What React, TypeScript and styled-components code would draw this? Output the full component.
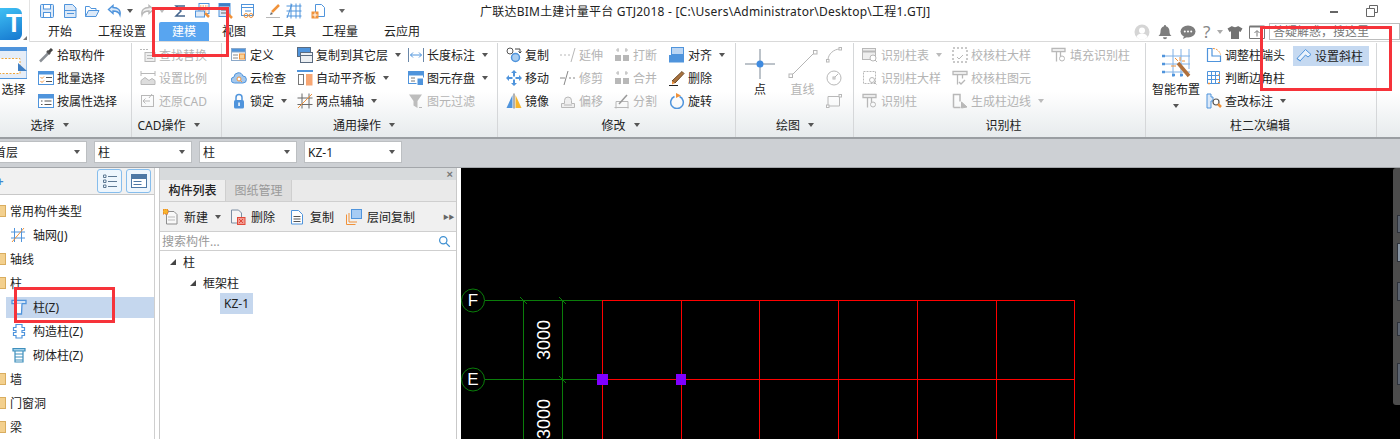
import React from 'react';
import styled, { createGlobalStyle } from 'styled-components';

const B = '#4f94dc', O = '#f0923a', G = '#b8b8b8', L = '#dce9f8', D = '#666', R = '#e04a3a', Y = '#f7b52c';

const line = (c: string) => ({ fill: 'none', stroke: c, strokeWidth: 1 });

const icons: Record<string, React.ReactNode> = {
  save: <g {...line(B)}><rect x="1.5" y="1.5" width="13" height="13" rx="1" fill={L} /><rect x="4.5" y="1.5" width="7" height="4.5" fill="#fff" /><rect x="4.5" y="9.5" width="7" height="5" fill="#fff" /></g>,
  doc: <g {...line(B)}><path d="M2.5 1.5h8l3.5 3.5v9.5h-11.500z" fill={L} /><path d="M2.500 7.500h11.500M5 10.500h7" /></g>,
  open: <g {...line(B)}><path d="M1.500 13.500v-10h4l1.500 2h5v2" /><path d="M1.500 13.500l3-6h10.500l-3 6z" fill={L} /></g>,
  undo: <g {...line(B)} strokeWidth="1.400"><path d="M6 2.500l-4.500 4 4.500 4v-2.500c4 0 6 1 7 4 1-5-2-7.500-7-7.500z" fill={L} /></g>,
  redo: <g {...line(G)} strokeWidth="1.400"><path d="M10 2.500l4.500 4-4.500 4v-2.500c-4 0-6 1-7 4-1-5 2-7.500 7-7.500z" fill="#f2f2f2" /></g>,
  sigma: <path d="M13 3h-9l5 5-5 5h9" {...line('#44648c')} strokeWidth="1.500" />,
  calc: <g><rect x="4" y="0.500" width="10" height="10" fill="#fff" stroke={B} /><path d="M5 3h8M5 5.500h8M5 8h8" stroke={O} strokeDasharray="1.500 1" /><rect x="0.500" y="8" width="9" height="6" fill={L} stroke={B} /><path d="M10 10l4 4" stroke={O} strokeWidth="2.500" /></g>,
  calc2: <g><rect x="2" y="0.500" width="11" height="13" fill={L} stroke={B} /><rect x="2" y="0.500" width="11" height="3" fill="#3f7fc4" /><path d="M4 7h6M4 10h6" stroke={D} /><path d="M10 10l5 5" stroke={O} strokeWidth="2.500" /></g>,
  calc3: <g {...line(B)}><rect x="1.500" y="1.500" width="12" height="11" fill="#fff" /><path d="M1.500 4.500h12M5 8h6" /><circle cx="6" cy="12.500" r="2" stroke={O} /><circle cx="11" cy="12.500" r="2" stroke={O} /></g>,
  pen: <g><path d="M14 2L7 9" stroke={O} strokeWidth="2.500" /><path d="M6 9l2 2-3 1z" fill={D} /><path d="M1 14.500h14" stroke={G} /></g>,
  grid: <g {...line(B)}><path d="M5 0.500v15M10 0.500v15M14 0.500v15M0.500 3h15M0.500 8h15M0.500 13h15" /><path d="M1 15L6 1" /></g>,
  docPlus: <g><path d="M4.500 1.500h6l3 3v9h-9z" fill="#fff" stroke={B} /><rect x="0.500" y="8.500" width="7" height="7" fill={O} /><path d="M4 9.500v5M1.500 12h5" stroke="#fff" /></g>,
  pick: <g><path d="M2 14.500l8-8" stroke="#8a8f95" strokeWidth="2.500" /><path d="M9 4l3 3" stroke="#555" strokeWidth="2.500" /><path d="M11 5l3-3" stroke="#444" strokeWidth="3" /></g>,
  listCheck: <g {...line(B)}><rect x="0.500" y="1.500" width="15" height="13" fill="#fff" /><rect x="0.500" y="1.500" width="15" height="2.500" fill={B} /><path d="M2.500 7l1.500 1.500 2-2M2.500 11l1.500 1.500 2-2" stroke={O} /><path d="M8 7.500h6M8 11.500h6" stroke="#555" /></g>,
  listAttr: <g {...line(B)}><rect x="0.500" y="1.500" width="15" height="13" fill="#fff" /><rect x="0.500" y="1.500" width="15" height="3.500" fill={B} /><path d="M3 8h1.500M3 11.500h1.500M6.500 8h7M6.500 11.500h7" stroke="#555" /></g>,
  find: <g {...line(G)}><path d="M0 2.500h8" strokeDasharray="2 1" /><rect x="5" y="5.500" width="10" height="9" fill="#eee" /><path d="M7 8.500h6M7 11.500h6" /></g>,
  scale: <g {...line(G)}><path d="M1 3.500h14M1 1v5M15 1v5" /><path d="M1 14.500v-4l4-3 4 3 3-2 3 2v4z" fill="#ddd" /></g>,
  restore: <g {...line(G)}><rect x="1.500" y="2.500" width="12" height="11" /><path d="M3 8h7M5.500 5.500L3 8l2.500 2.500M12 1l-3 4" /></g>,
  define: <g {...line('#8ca9c9')}><rect x="0.500" y="1.500" width="14" height="12" fill="#fff" /><rect x="0.500" y="1.500" width="14" height="3.500" fill={B} /><rect x="8.500" y="7" width="5" height="5" fill="#f9d39a" stroke={O} /><path d="M2 8h5M2 11h5" stroke="#8a8a8a" /></g>,
  cloud: <g><path d="M3.500 13a3 3 0 0 1-.5-6 4.500 4.500 0 0 1 8.800-1 3.500 3.500 0 0 1 .2 7z" fill="#a5c8ec" stroke={B} /><circle cx="8" cy="9" r="2" fill="#fff" stroke={O} /><path d="M9.500 10.500l1.500 1.500" stroke={O} /></g>,
  lock: <g><path d="M5 7V4.500a3 3 0 0 1 6 0V7" {...line(B)} strokeWidth="1.500" /><rect x="3" y="7" width="10" height="8.500" rx="1.500" fill={B} /><rect x="7.300" y="9.500" width="1.500" height="3.500" fill="#fff" /></g>,
  copyFloor: <g {...line('#5a6b80')}><rect x="0.500" y="0.500" width="13" height="9" fill={B} /><rect x="3.500" y="5.500" width="12" height="10" fill="#eceff2" /><path d="M3.500 8.500h12" /></g>,
  plate: <g><path d="M0 1h16" stroke={B} strokeWidth="2" /><rect x="1.500" y="4.500" width="5" height="10" fill="#fff" stroke="#777" /><rect x="9" y="4" width="6.500" height="11.500" fill="#f7a673" /></g>,
  twoPoint: <g {...line('#6b6b6b')}><path d="M5 0.500v15M12 0.500v15M0.500 5h15M0.500 11.500h15" /><path d="M1 15L15 1" stroke={O} /></g>,
  dim: <g {...line('#6a87a8')}><path d="M0.500 1v14M15.500 1v14" /><path d="M2.500 8h11M5 5.500L2.500 8 5 10.500M11 5.500L13.500 8 11 10.500" stroke={B} /></g>,
  saveEl: <g {...line(B)}><rect x="0.500" y="1.500" width="15" height="12" fill="#fff" /><rect x="0.500" y="1.500" width="15" height="3.500" fill={B} /><path d="M3 8h4M3 11h4" stroke="#777" /><rect x="9" y="8" width="6.500" height="7.500" fill={B} stroke="#fff" /></g>,
  filter: <g><path d="M1 1.500h13L9.500 8v7l-4-2.500V8z" fill="#bdbdbd" /><path d="M11 14.500h3" stroke={G} /></g>,
  copy: <g><circle cx="4" cy="4" r="3" fill="#fff" stroke="#555" /><circle cx="9.500" cy="10.500" r="4" fill="#a9cdf0" stroke={B} strokeWidth="1.500" /><path d="M9 2h5v4M12.500 4.500L14 6l1.500-1.500" {...line('#444')} /></g>,
  move: <g fill={B}><path d="M8 0l3 3H9v3.500H7V3H5zM8 16l-3-3h2V9.500h2V13h2zM0 8l3-3v2h3.500v2H3v2zM16 8l-3 3V9H9.500V7H13V5z" /></g>,
  mirror: <g><path d="M6.500 2v13H0.500z" fill={B} /><path d="M9.500 2v13h6z" fill={Y} /><path d="M8 0.500v15" stroke="#666" /></g>,
  extend: <path d="M0 8h2M4 8h2M8 8h2M15 1L11 15" {...line(G)} />,
  trim: <path d="M0 8h5M9 8h2M13 8h2M8 1L4 15" {...line('#888')} />,
  offset: <g {...line(G)}><path d="M1.500 14.500v-4h3v-3a3.500 3.500 0 0 1 7 0v3h3v4z" fill="#efefef" /><path d="M4 12h8" /></g>,
  break: <g fill={G}><rect x="1" y="8" width="6" height="6" /><rect x="9" y="8" width="6" height="6" /><path d="M2 3h3M11 3h3M4 1v4M12 1v4" stroke={G} /></g>,
  split: <g {...line(G)}><path d="M0.500 14.500h14M2 8.500h12v7M2 8.500v7" /><path d="M5 11L13 2" stroke="#999" strokeWidth="1.500" /></g>,
  align: <g><rect x="2.500" y="0.500" width="12" height="7" fill="#bcd6f3" stroke={B} /><rect x="0" y="8" width="15" height="7.500" fill={B} /></g>,
  erase: <g><path d="M3 11L13 1.500l2 2L6 13z" fill="#a9733f" stroke="#6f4a26" /><path d="M3 11l3 2-3 1.500z" fill={O} /><path d="M0 15.500h9" stroke="#222" /></g>,
  rotate: <g><path d="M5.500 3.500a6.300 6.300 0 1 0 5 0" {...line(B)} strokeWidth="1.500" /><path d="M7 0v5l5-2.500z" fill={O} /></g>,
  arc: <g {...line(G)}><path d="M2 13C2 7 8 2 14 2" /><rect x="0.500" y="12.500" width="2.500" height="2.500" fill="#fff" /><rect x="13" y="0.500" width="2.500" height="2.500" fill="#fff" /></g>,
  circle: <g {...line(G)}><circle cx="8" cy="8" r="7" /><path d="M8 8l4-4" /><rect x="7" y="7" width="2" height="2" fill="#fff" /></g>,
  rectDraw: <g {...line(G)}><path d="M2 3.500h11.500v9.500H2z" /><rect x="0.500" y="12" width="2.500" height="2.500" fill="#fff" /><rect x="13" y="1.500" width="2.500" height="2.500" fill="#fff" /></g>,
  rTable: <g {...line(G)}><rect x="0.500" y="1.500" width="13" height="11" fill="#eee" /><path d="M0.500 4.500h13" strokeWidth="2" /><circle cx="11" cy="11" r="3" fill="#fff" /><path d="M13 13l2 2" /></g>,
  rDetail: <g {...line(G)}><rect x="1.500" y="1.500" width="12" height="12" strokeDasharray="2 1" /><circle cx="10" cy="10" r="2.500" fill="#fff" /><path d="M12 12l2.500 2.500" /></g>,
  rCol: <g {...line(G)}><path d="M1 1.500h13v3H1zM4 4.500h7M5.500 4.500v10M9.500 4.500v5" strokeWidth="1.300" /><circle cx="11" cy="11.500" r="2.500" /></g>,
  cDetail: <g {...line(G)}><rect x="1" y="1" width="14" height="14" strokeDasharray="2 2" strokeWidth="1.500" /><path d="M5 10l2 2 4-4" /></g>,
  cCol: <g {...line(G)}><path d="M1 1.500h14v3H1zM4 4.500h8M5.500 4.500v10M10.500 4.500v4M7 12l2 2 4-4" strokeWidth="1.300" /></g>,
  edge: <g {...line(G)}><path d="M1.500 14.500v-13h6.500v7" strokeWidth="1.500" /><path d="M1.500 14.500h7" strokeWidth="1.500" /><path d="M9.500 9l5.500 5-5.500 1z" fill={G} /></g>,
  adjust: <g><path d="M1.500 1.500h4.500v7.500h8.500v5.500H1.500z" fill="#fff" {...line(B)} strokeWidth="1.200" /><path d="M7 1.500a8 8 0 0 1 7.500 6" {...line(O)} strokeDasharray="2 1" /></g>,
  corner: <g {...line(B)}><path d="M1.500 1.500h12v12h-12zM5.500 1.500v12M9.500 1.500v12M1.500 5.500h12M1.500 9.500h12" /><path d="M2 13.500h2M3 12.500v2M12 12.500h2M13 4v2M11 9.500h2" stroke={O} /></g>,
  mark: <g><path d="M1 1h4v3h2v4H5v7H1z" fill={L} stroke={B} /><circle cx="10" cy="9" r="3" fill="#fff" stroke="#555" strokeWidth="1.200" /><path d="M12 11l3 3" stroke={O} strokeWidth="2.500" /></g>,
  slant: <g {...line(B)} fill="#eaf2fc"><path d="M1 10.500L9.500 1.500l5.500 5-3 2.500-2.500-2-5.500 6z" /><path d="M1 10.500l3.500 2.500" /></g>,
  newDoc: <g><path d="M3.500 2.500h7.500l3 3v9.500H3.500z" fill="#f8f8f8" stroke="#8e8e8e" /><path d="M5 8h7M5 11h7" stroke="#bbb" /><rect x="0" y="0" width="5" height="5" fill={Y} stroke="#e06a2a" strokeDasharray="1 1" /></g>,
  delDoc: <g><path d="M1.500 1h7l3 3v10h-10z" fill="#f5f5f5" stroke="#7c8ea3" /><rect x="7.500" y="8.500" width="7.500" height="7" fill="#f29c93" stroke={R} /><path d="M9 10l4 4M13 10l-4 4" stroke={R} /></g>,
  copyDoc: <g {...line(B)}><path d="M2.500 1.500h7l4 4v9.500h-11z" fill="#fff" /><path d="M4.500 7.500h7M4.500 10h7M4.500 12.500h7" stroke="#555" /></g>,
  floorCopy: <g><path d="M0.500 5.500v10h9" {...line(O)} /><path d="M3 4v9h8" {...line(O)} /><rect x="5.500" y="0.500" width="10" height="9" fill="#a7ccf4" stroke={B} /></g>,
  net: <g {...line(B)}><path d="M3.500 1v14M10.500 1v14M0 5h14M0 11h14" /><path d="M1 15L13 1" stroke={O} /></g>,
  col: <g {...line(B)}><path d="M1 1.500h14v3H1z" fill="#fff" strokeWidth="1.300" /><path d="M5 4.500l.5 10.500h5L11 4.500" fill="#fff" strokeWidth="1.300" /></g>,
  struct: <g {...line(B)} strokeWidth="1.200"><path d="M5 1.500h6v3h2.500v3H11v2h2.500v3H11v2.500H5V12.500H2.500v-3H5v-2H2.500v-3H5z" fill="#fff" /></g>,
  masonry: <g {...line('#3f8fbc')} strokeWidth="1.200"><path d="M2 1.500h12v2.500H2z" fill="#9fd0ea" /><path d="M4 4v11h8V4M4 7h8M4 10h8M4 13h8" /></g>,
  avatar: <g><circle cx="8" cy="8" r="7.500" fill="#d5d5d5" /><circle cx="8" cy="6.500" r="3" fill="#fff" /><path d="M2.500 13c1-3 3-3.500 5.500-3.500s4.500.5 5.500 3.500a7 7 0 0 1-11 0z" fill="#fff" /></g>,
  bell: <path d="M8 1a1 1 0 0 1 1 1.200c2.500.6 3.500 2.800 3.500 5.300 0 2 .5 3 2 4.500H1.500c1.500-1.500 2-2.500 2-4.500 0-2.500 1-4.700 3.500-5.300A1 1 0 0 1 8 1zM6 13.200h4a2 2 0 0 1-4 0z" fill="#7d7d7d" />,
  chat: <g><ellipse cx="8" cy="7.500" rx="7.500" ry="6" fill="#7d7d7d" /><path d="M4 12l-1 3 4-2z" fill="#7d7d7d" /><circle cx="4.800" cy="7.500" r="1" fill="#fff" /><circle cx="8" cy="7.500" r="1" fill="#fff" /><circle cx="11.200" cy="7.500" r="1" fill="#fff" /></g>,
  shirt: <path d="M5 2L0.500 4.500 2.500 8 4 7.200V15h8V7.200L13.500 8l2-3.500L11 2C10 3.500 6 3.500 5 2z" fill="#737373" />,
  upbox: <g {...line('#777')}><path d="M0.500 2.500h15v12h-15z" /><path d="M0.500 2.500h15" strokeWidth="2" /><path d="M8 12.500V7M5.500 9L8 6.500 10.500 9" /></g>,
  search: <g {...line('#3d8fd1')} strokeWidth="1.500"><circle cx="6.500" cy="6.500" r="4.500" /><path d="M10 10l4.500 4.500" /></g>,
  listView: <g {...line('#5d7893')}><path d="M1.500 2h2.500v2.500H1.500zM1.500 7h2.500v2.500H1.500zM1.500 12h2.500v2.500H1.500zM6 3.500h9M6 8.500h9M6 13.500h9" /></g>,
  cardView: <g {...line('#4e78a5')}><rect x="0.500" y="1.500" width="15" height="13" fill="#fff" /><rect x="0.500" y="1.500" width="15" height="4" fill="#4e78a5" /><path d="M2.500 8.500h8M2.500 11.500h8" /></g>,
};

const Svg = styled.svg`
  display: block;
  flex: none;
`;

const Icon = ({ n, s = 16 }: { n: string; s?: number }) => (
  <Svg width={s} height={s} viewBox="0 0 16 16">{icons[n]}</Svg>
);

const Global = createGlobalStyle`
  html, body { margin: 0; padding: 0; background: #fff; }
  body { font: 12px "Noto Sans", "Noto Sans CJK SC", sans-serif; color: #222; }
`;

const Root = styled.div`
  position: relative;
  width: 1400px;
  height: 439px;
  overflow: hidden;
  display: flex;
  flex-direction: column;
  background: #fff;
`;

const Header = styled.header`
  height: 42px;
  display: flex;
  flex: none;
  background: #fff;
`;
const LogoCol = styled.div`
  width: 30px;
  flex: none;
  box-sizing: border-box;
  padding-top: 8px;
  border-right: 1px solid #e3e3e3;
  position: relative;
`;
const Logo = styled.div`
  width: 22px;
  height: 32px;
  border-radius: 0 6px 6px 0;
  background: linear-gradient(160deg, #3fc0f4, #1577cf);
  color: #fff;
  font: bold 26px/30px "Liberation Sans", sans-serif;
  text-align: right;
  overflow: hidden;
`;
const LogoTag = styled.i`
  position: absolute;
  left: 23px;
  top: 36px;
  width: 0;
  height: 0;
  border-left: 4px solid transparent;
  border-bottom: 4px solid #777;
`;
const HeadMain = styled.div`
  flex: 1;
  min-width: 0;
  display: flex;
  flex-direction: column;
  border-bottom: 1px solid #d9d9d9;
`;
const TitleRow = styled.div`
  height: 21px;
  margin-bottom: 1px;
  display: flex;
  align-items: center;
`;
const Quick = styled.div`
  width: 450px;
  flex: none;
  display: flex;
  align-items: center;
  padding-left: 9px;
  box-sizing: border-box;
`;
const QBtn = styled.span<{ $w: number }>`
  width: ${p => p.$w}px;
  flex: none;
  display: flex;
  align-items: center;
`;
const Caret = styled.i<{ $ml?: number; $c?: string }>`
  flex: none;
  display: inline-block;
  margin-left: ${p => p.$ml ?? 4}px;
  width: 0;
  height: 0;
  border-left: 3.500px solid transparent;
  border-right: 3.500px solid transparent;
  border-top: 4px solid ${p => p.$c ?? '#555'};
`;
const Title = styled.div`
  font-size: 12px;
  letter-spacing: 0.23px;
  white-space: nowrap;
  color: #222;
`;
const WinBtns = styled.div`
  margin-left: auto;
  display: flex;
  align-items: center;
  gap: 28px;
  padding-right: 22px;
`;
const WinMin = styled.i`
  display: block;
  width: 8px;
  height: 2px;
  background: #666;
  margin-top: 3px;
`;
const TabRow = styled.div`
  height: 19px;
  display: flex;
  align-items: center;
`;
const Tabs = styled.nav`
  display: flex;
  height: 19px;
  padding-left: 5px;
`;
const Tab = styled.div<{ $on?: boolean }>`
  padding: 0 13px;
  line-height: 19px;
  height: 19px;
  border-radius: 2px 2px 0 0;
  white-space: nowrap;
  background: ${p => (p.$on ? '#58a5f0' : 'transparent')};
  color: ${p => (p.$on ? '#fff' : '#222')};
`;
const Tools = styled.div`
  margin-left: auto;
  display: flex;
  align-items: center;
`;
const ToolCell = styled.span<{ $w: number }>`
  width: ${p => p.$w}px;
  display: flex;
  align-items: center;
`;
const Ask = styled.span`
  color: #888;
  font-size: 17px;
  line-height: 16px;
  width: 10px;
  padding-left: 3px;
`;
const AskBox = styled.div`
  width: 131px;
  height: 17px;
  box-sizing: border-box;
  border: 1px solid #bdbdbd;
  color: #777;
  padding-left: 3px;
  line-height: 15px;
  white-space: nowrap;
  overflow: hidden;
`;

const Ribbon = styled.section`
  height: 97px;
  flex: none;
  box-sizing: border-box;
  display: flex;
  padding-top: 1px;
  border-bottom: 2px solid #9a9ea2;
  background: linear-gradient(#fff 0, #fff 52%, #e7ebed 100%);
`;
const Group = styled.div<{ $w: number; $pl?: number }>`
  width: ${p => p.$w}px;
  flex: none;
  box-sizing: border-box;
  display: flex;
  flex-direction: column;
  padding-left: ${p => p.$pl ?? 0}px;
  border-right: 1px solid #d5d7d9;
`;
const Body = styled.div`
  height: 69px;
  display: flex;
`;
const GroupLabel = styled.div<{ $pr?: number }>`
  height: 25px;
  margin-left: ${p => -(p.$pr ?? 0)}px;
  display: flex;
  align-items: center;
  justify-content: center;
  font-size: 12px;
  color: #222;
  padding-right: ${p => p.$pr ?? 0}px;
`;
const Col = styled.div<{ $w?: number }>`
  ${p => (p.$w ? `width: ${p.$w}px;` : 'flex: 1;')}
  flex-shrink: 0;
  display: flex;
  flex-direction: column;
`;
const Item = styled.div<{ $off?: boolean }>`
  height: 23px;
  display: flex;
  align-items: center;
  gap: 3px;
  white-space: nowrap;
  color: ${p => (p.$off ? '#b4b4b4' : '#222')};
`;
const Active = styled(Item)`
  height: 20px;
  width: 76px;
  margin-top: 3px;
  padding-left: 3px;
  box-sizing: border-box;
  background: #c5d9f1;
`;
const Large = styled.div<{ $w: number; $mr?: number; $off?: boolean }>`
  width: ${p => p.$w}px;
  margin-right: ${p => p.$mr ?? 0}px;
  flex: none;
  display: flex;
  flex-direction: column;
  align-items: center;
  white-space: nowrap;
  color: ${p => (p.$off ? '#b4b4b4' : '#222')};
`;
const LargeIcon = styled.div`
  height: 36px;
  display: flex;
  align-items: flex-end;
`;
const LargeText = styled.div`
  margin-top: 3px;
  line-height: 16px;
`;
const LargeCaret = styled.div`
  margin-top: 6px;
  line-height: 0;
`;

const Strip = styled.div`
  height: 29px;
  flex: none;
  box-sizing: border-box;
  background: #cdd0d4;
  border-bottom: 1px solid #a3a6aa;
  display: flex;
  align-items: center;
  gap: 7px;
  padding-bottom: 2px;
  margin-left: -10px;
`;
const Combo = styled.div<{ $w: number }>`
  width: ${p => p.$w}px;
  height: 22px;
  box-sizing: border-box;
  background: #fff;
  border: 1px solid #bcbfc2;
  display: flex;
  align-items: center;
  justify-content: space-between;
  padding: 0 6px 0 3px;
  font-size: 12px;
`;

const Main = styled.main`
  flex: 1;
  min-height: 0;
  display: flex;
`;
const Tree = styled.aside`
  width: 155px;
  flex: none;
  box-sizing: border-box;
  border-right: 1px solid #cfcfcf;
  overflow: hidden;
`;
const TreeBar = styled.div`
  height: 27px;
  box-sizing: border-box;
  background: #f1f1f1;
  border-bottom: 1px solid #c8c8c8;
  display: flex;
  align-items: center;
  padding-right: 3px;
  gap: 4px;
`;
const Plus = styled.span`
  margin-right: auto;
  margin-left: -4px;
  color: #3f87d0;
  font: bold 13px/13px "Liberation Sans", sans-serif;
`;
const ViewBtn = styled.div`
  width: 25px;
  height: 24px;
  box-sizing: border-box;
  border: 1px solid #86bdec;
  border-radius: 3px;
  background: #eef6fd;
  display: flex;
  align-items: center;
  justify-content: center;
`;
const TreeList = styled.ul`
  list-style: none;
  margin: 4px 0 0;
  padding: 0;
`;
const Row = styled.li`
  height: 24px;
  display: flex;
  align-items: center;
`;
const Folder = styled.i`
  width: 6px;
  height: 12px;
  flex: none;
  margin-right: 4px;
  background: #f3d08e;
  border: solid #d9ad5f;
  border-width: 1px 1px 1px 0;
  box-sizing: border-box;
`;
const Leaf = styled.div<{ $on?: boolean }>`
  margin-left: 6px;
  flex: 1;
  height: 21px;
  display: flex;
  align-items: center;
  gap: 6px;
  padding-left: 5px;
  background: ${p => (p.$on ? '#c5d7ee' : 'transparent')};
`;
const Gap = styled.div`
  width: 4px;
  flex: none;
`;
const Panel = styled.section`
  width: 298px;
  flex: none;
  box-sizing: border-box;
  border: solid #c9c9c9;
  border-width: 0 1px;
  display: flex;
  flex-direction: column;
`;
const PanelTop = styled.div`
  height: 12px;
  flex: none;
  background: #d7dadc;
  display: flex;
  justify-content: flex-end;
  align-items: center;
  padding-right: 3px;
  color: #777;
  font: bold 11px/12px "Liberation Sans", sans-serif;
`;
const PanelTabs = styled.div`
  height: 21px;
  flex: none;
  display: flex;
  background: #eaeaea;
  border-bottom: 1px solid #cfcfcf;
`;
const PanelTab = styled.div<{ $on?: boolean }>`
  width: 65px;
  text-align: center;
  line-height: 21px;
  font-weight: ${p => (p.$on ? 500 : 400)};
  color: ${p => (p.$on ? '#222' : '#999')};
  background: ${p => (p.$on ? '#eeeeee' : '#dedede')};
  border-right: 1px solid #cfcfcf;
`;
const PanelBar = styled.div`
  height: 30px;
  flex: none;
  box-sizing: border-box;
  background: #f0f0f0;
  border-bottom: 1px solid #cfcfcf;
  display: flex;
  align-items: center;
  padding-left: 3px;
`;
const PanelBtn = styled.div<{ $w: number }>`
  width: ${p => p.$w}px;
  flex: none;
  display: flex;
  align-items: center;
  gap: 5px;
  white-space: nowrap;
`;
const More = styled.span`
  margin-left: auto;
  margin-right: 2px;
  font-size: 6px;
  letter-spacing: -0.500px;
  color: #666;
`;
const SearchRow = styled.div`
  height: 19px;
  flex: none;
  box-sizing: border-box;
  border-bottom: 1px solid #cfcfcf;
  display: flex;
  align-items: center;
  justify-content: space-between;
  padding: 0 5px 0 2px;
  color: #999;
`;
const Node = styled.div<{ $lv: number }>`
  height: 21px;
  display: flex;
  align-items: center;
  padding-left: ${p => p.$lv}px;
  gap: 7px;
`;
const Arrow = styled.i`
  width: 0;
  height: 0;
  border-left: 6px solid transparent;
  border-bottom: 6px solid #444;
`;
const Selected = styled.span`
  background: #c5d7ee;
  line-height: 21px;
  padding: 0 4px;
`;
const Canvas = styled.div`
  position: relative;
  flex: 1;
  margin-left: 4px;
  background: #000;
`;
const Plot = styled.svg`
  display: block;
`;
const SideDock = styled.div`
  position: absolute;
  right: 0;
  top: 0;
  width: 7px;
  height: 237px;
  background: #4c4c4c;
  border-radius: 3px 0 0 3px;
  overflow: hidden;
`;
const DockChip = styled.i<{ $y: number; $h: number; $c: string }>`
  position: absolute;
  left: 4px;
  top: ${p => p.$y}px;
  width: 6px;
  height: ${p => p.$h}px;
  background: ${p => p.$c};
  border: 1px solid #2c3038;
  box-sizing: border-box;
`;
const Mark = styled.div<{ $x: number; $y: number; $w: number; $h: number }>`
  position: absolute;
  left: ${p => p.$x}px;
  top: ${p => p.$y}px;
  width: ${p => p.$w}px;
  height: ${p => p.$h}px;
  box-sizing: border-box;
  border: 3px solid #f6333a;
  pointer-events: none;
`;

const I = ({ n, t, off, caret }: { n: string; t: string; off?: boolean; caret?: boolean }) => (
  <Item $off={off}>
    <Icon n={n} />
    {t}
    {caret && <Caret $c={off ? '#bbb' : '#555'} />}
  </Item>
);

const quick = [
  ['save', 23], ['doc', 22], ['open', 23], ['undo', 32, 1], ['redo', 33, 1], ['sigma', 23], ['calc', 22], ['calc2', 23], ['calc3', 25],
  ['pen', 21], ['grid', 25], ['docPlus', 24],
] as [string, number, number?][];

const tabs = ['开始', '工程设置', '建模', '视图', '工具', '工程量', '云应用'];

const treeRows: { t: string; n?: string; on?: boolean }[] = [
  { t: '常用构件类型' }, { t: '轴网(J)', n: 'net' }, { t: '轴线' }, { t: '柱' },
  { t: '柱(Z)', n: 'col', on: true }, { t: '构造柱(Z)', n: 'struct' }, { t: '砌体柱(Z)', n: 'masonry' },
  { t: '墙' }, { t: '门窗洞' }, { t: '梁' },
];

const reds = [602, 681, 759, 838, 917, 996, 1074];

export default function App() {
  return (
    <Root>
      <Global />
      <Header>
        <LogoCol>
          <Logo>T</Logo>
          <LogoTag />
        </LogoCol>
        <HeadMain>
          <TitleRow>
            <Quick>
              {quick.map(([n, w, c]) => (
                <QBtn key={n} $w={w}>
                  <Icon n={n} />
                  {c && <Caret $c={n === 'redo' ? '#bbb' : '#555'} />}
                </QBtn>
              ))}
              <Caret $c="#666" />
            </Quick>
            <Title>广联达BIM土建计量平台 GTJ2018 - [C:\Users\Administrator\Desktop\工程1.GTJ]</Title>
            <WinBtns>
              <WinMin />
              <Svg width={12} height={12} viewBox="0 0 12 12">
                <path d="M3.500 3V.5h8v7H9M.5 3.500h8v8h-8z" fill="none" stroke="#666" />
              </Svg>
            </WinBtns>
          </TitleRow>
          <TabRow>
            <Tabs>
              {tabs.map(t => (
                <Tab key={t} $on={t === '建模'}>{t}</Tab>
              ))}
            </Tabs>
            <Tools>
              <ToolCell $w={23}><Icon n="avatar" /></ToolCell>
              <ToolCell $w={23}><Icon n="bell" /></ToolCell>
              <ToolCell $w={20}><Icon n="chat" /></ToolCell>
              <ToolCell $w={27}><Ask>?</Ask><Caret $c="#aaa" /></ToolCell>
              <ToolCell $w={22}><Icon n="shirt" /></ToolCell>
              <ToolCell $w={20}><Icon n="upbox" /></ToolCell>
              <AskBox>答疑解惑，搜这里</AskBox>
            </Tools>
          </TabRow>
        </HeadMain>
      </Header>

      <Ribbon>
        <Group $w={132}>
          <Body>
            <Large $w={27} $mr={11}>
              <LargeIcon>
                <Svg width={27} height={32} viewBox="0 0 27 32">
                  <rect x="-4" y="0.500" width="31" height="31" fill="#e6edf7" stroke="#4f94dc" />
                  <rect x="-4" y="0" width="31" height="4" fill="#4f94dc" />
                  <rect x="-2" y="11.500" width="22" height="15" fill="#fff" stroke="#f0a63a" strokeDasharray="2 1.500" />
                  <path d="M18 16l9 8h-9z" fill="#3f7fc4" />
                </Svg>
              </LargeIcon>
              <LargeText>选择</LargeText>
            </Large>
            <Col>
              <I n="pick" t="拾取构件" />
              <I n="listCheck" t="批量选择" />
              <I n="listAttr" t="按属性选择" />
            </Col>
          </Body>
          <GroupLabel $pr={16}>选择<Caret $ml={8} /></GroupLabel>
        </Group>
        <Group $w={90} $pl={8}>
          <Body>
            <Col>
              <I n="find" t="查找替换" off />
              <I n="scale" t="设置比例" off />
              <I n="restore" t="还原CAD" off />
            </Col>
          </Body>
          <GroupLabel $pr={12}>CAD操作<Caret $ml={8} /></GroupLabel>
        </Group>
        <Group $w={276} $pl={9}>
          <Body>
            <Col $w={66}>
              <I n="define" t="定义" />
              <I n="cloud" t="云检查" />
              <I n="lock" t="锁定" caret />
            </Col>
            <Col $w={111}>
              <I n="copyFloor" t="复制到其它层" caret />
              <I n="plate" t="自动平齐板" caret />
              <I n="twoPoint" t="两点辅轴" caret />
            </Col>
            <Col>
              <I n="dim" t="长度标注" caret />
              <I n="saveEl" t="图元存盘" caret />
              <I n="filter" t="图元过滤" off />
            </Col>
          </Body>
          <GroupLabel>通用操作<Caret $ml={8} /></GroupLabel>
        </Group>
        <Group $w={238} $pl={8}>
          <Body>
            <Col $w={54}>
              <I n="copy" t="复制" />
              <I n="move" t="移动" />
              <I n="mirror" t="镜像" />
            </Col>
            <Col $w={54}>
              <I n="extend" t="延伸" off />
              <I n="trim" t="修剪" off />
              <I n="offset" t="偏移" off />
            </Col>
            <Col $w={55}>
              <I n="break" t="打断" off />
              <I n="break" t="合并" off />
              <I n="split" t="分割" off />
            </Col>
            <Col>
              <I n="align" t="对齐" caret />
              <I n="erase" t="删除" />
              <I n="rotate" t="旋转" />
            </Col>
          </Body>
          <GroupLabel>修改<Caret $ml={8} /></GroupLabel>
        </Group>
        <Group $w={118} $pl={9}>
          <Body>
            <Large $w={30} $mr={10}>
              <LargeIcon>
                <Svg width={30} height={30} viewBox="0 0 30 30">
                  <path d="M15 0v30M0 15h30" stroke="#7a8794" />
                  <circle cx="15" cy="15" r="3.500" fill="#3f8be0" />
                </Svg>
              </LargeIcon>
              <LargeText>点</LargeText>
            </Large>
            <Large $w={35} $mr={6} $off>
              <LargeIcon>
                <Svg width={30} height={30} viewBox="0 0 30 30">
                  <path d="M3 27L27 3" stroke="#b5b5b5" />
                  <rect x="1" y="25" width="3.500" height="3.500" fill="#fff" stroke="#b5b5b5" />
                  <rect x="25.500" y="1.500" width="3.500" height="3.500" fill="#fff" stroke="#b5b5b5" />
                </Svg>
              </LargeIcon>
              <LargeText>直线</LargeText>
            </Large>
            <Col>
              <I n="arc" t="" off />
              <I n="circle" t="" off />
              <I n="rectDraw" t="" off />
            </Col>
          </Body>
          <GroupLabel $pr={4}>绘图<Caret $ml={8} /></GroupLabel>
        </Group>
        <Group $w={292} $pl={8}>
          <Body>
            <Col $w={90}>
              <I n="rTable" t="识别柱表" off caret />
              <I n="rDetail" t="识别柱大样" off />
              <I n="rCol" t="识别柱" off />
            </Col>
            <Col $w={99}>
              <I n="cDetail" t="校核柱大样" off />
              <I n="cCol" t="校核柱图元" off />
              <I n="edge" t="生成柱边线" off caret />
            </Col>
            <Col>
              <I n="rCol" t="填充识别柱" off />
            </Col>
          </Body>
          <GroupLabel>识别柱</GroupLabel>
        </Group>
        <Group $w={231} $pl={6}>
          <Body>
            <Large $w={48} $mr={6}>
              <LargeIcon>
                <Svg width={30} height={30} viewBox="0 0 30 30">
                  <path d="M3 7h26M3 15h26M3 23h26M12 0v28M20 0v28M28 0v20" stroke="#7fb0e6" fill="none" />
                  <path d="M1 7h3M1 15h3M1 23h3M11 26h3M19 26h3" stroke="#4f94dc" strokeWidth="2.500" />
                  <path d="M17 14l11 13" stroke="#b0703c" strokeWidth="3.500" />
                  <path d="M14 9l3 3M19 8v4M10 17h5M21 12h3" stroke="#f0923a" />
                </Svg>
              </LargeIcon>
              <LargeText>智能布置</LargeText>
              <LargeCaret><Caret $ml={0} /></LargeCaret>
            </Large>
            <Col $w={87}>
              <I n="adjust" t="调整柱端头" />
              <I n="corner" t="判断边角柱" />
              <I n="mark" t="查改标注" caret />
            </Col>
            <Col>
              <Active>
                <Icon n="slant" />
                设置斜柱
              </Active>
            </Col>
          </Body>
          <GroupLabel $pr={4}>柱二次编辑</GroupLabel>
        </Group>
      </Ribbon>

      <Strip>
        <Combo $w={97}>首层<Caret /></Combo>
        <Combo $w={98}>柱<Caret /></Combo>
        <Combo $w={98}>柱<Caret /></Combo>
        <Combo $w={98}>KZ-1<Caret /></Combo>
      </Strip>

      <Main>
        <Tree>
          <TreeBar>
            <Plus>+</Plus>
            <ViewBtn><Icon n="listView" /></ViewBtn>
            <ViewBtn><Icon n="cardView" /></ViewBtn>
          </TreeBar>
          <TreeList>
            {treeRows.map(r => (
              <Row key={r.t}>
                {r.n ? (
                  <Leaf $on={r.on}>
                    <Icon n={r.n} />
                    {r.t}
                  </Leaf>
                ) : (
                  <>
                    <Folder />
                    {r.t}
                  </>
                )}
              </Row>
            ))}
          </TreeList>
        </Tree>
        <Gap />
        <Panel>
          <PanelTop>×</PanelTop>
          <PanelTabs>
            <PanelTab $on>构件列表</PanelTab>
            <PanelTab>图纸管理</PanelTab>
          </PanelTabs>
          <PanelBar>
            <PanelBtn $w={67}><Icon n="newDoc" />新建<Caret $ml={2} /></PanelBtn>
            <PanelBtn $w={59}><Icon n="delDoc" />删除</PanelBtn>
            <PanelBtn $w={57}><Icon n="copyDoc" />复制</PanelBtn>
            <PanelBtn $w={80}><Icon n="floorCopy" />层间复制</PanelBtn>
            <More>▶▶</More>
          </PanelBar>
          <SearchRow>
            搜索构件...
            <Icon n="search" s={13} />
          </SearchRow>
          <div>
            <Node $lv={10}><Arrow />柱</Node>
            <Node $lv={30}><Arrow />框架柱</Node>
            <Node $lv={60}><Selected>KZ-1</Selected></Node>
          </div>
        </Panel>
        <Canvas>
          <Plot width={939} height={271} viewBox="461 168 939 271">
            <g stroke="#0a7d0a" fill="none">
              <path d="M485 300.500H602M485 379.500H602M523.500 300V439M562.500 300V439" />
              <path d="M520 297l7 7M559 297l7 7M559 376l7 7" />
              <circle cx="473" cy="300.500" r="11.500" />
              <circle cx="473" cy="379.500" r="11.500" />
            </g>
            <g stroke="#ff0000" fill="none">
              <path d="M602 300.500H1075M602 379.500H1075" />
              {reds.map(x => <path key={x} d={`M${x + 0.5} 300V439`} />)}
            </g>
            <rect x="597" y="374" width="11" height="11" fill="#8000ff" />
            <rect x="676" y="374" width="10" height="11" fill="#8000ff" />
            <g fill="#fff" fontFamily="Liberation Sans" textAnchor="middle">
              <text x="473" y="306" fontSize="17">F</text>
              <text x="473" y="385" fontSize="17">E</text>
              <text transform="translate(550 340) rotate(-90)" fontSize="18">3000</text>
              <text transform="translate(550 419) rotate(-90)" fontSize="18">3000</text>
            </g>
          </Plot>
          <SideDock>
            <DockChip $y={47} $h={18} $c="#5b6370" />
            <DockChip $y={75} $h={19} $c="#8a97a6" />
            <DockChip $y={114} $h={19} $c="#5b6370" />
            <DockChip $y={154} $h={14} $c="#5b6370" />
            <DockChip $y={195} $h={22} $c="#5b6370" />
          </SideDock>
        </Canvas>
      </Main>

      <Mark $x={152} $y={7} $w={77} $h={50} />
      <Mark $x={14} $y={287} $w={101} $h={36} />
      <Mark $x={1260} $y={26} $w={132} $h={65} />
    </Root>
  );
}
